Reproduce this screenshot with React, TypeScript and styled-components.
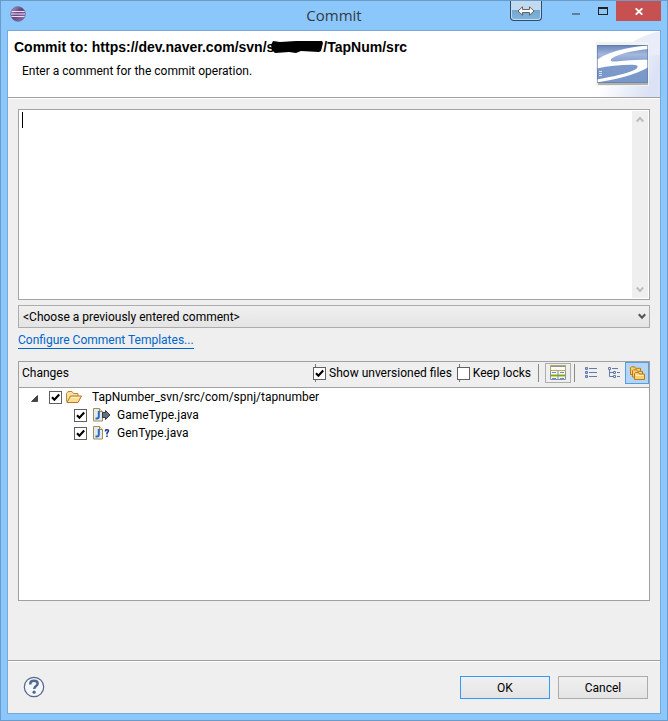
import React, { useState } from "react";
import styled, { createGlobalStyle } from "styled-components";

const Global = createGlobalStyle`
  *, *::before, *::after { box-sizing: border-box; }
  body { margin: 0; }
  body, button, input, select, textarea {
    font-family: Roboto, "Noto Sans", sans-serif;
    font-size: 12px;
    line-height: 18px;
    color: #000;
  }
  button { padding: 0; border: 0; background: none; }
`;

const Window = styled.div`
  display: flex;
  flex-direction: column;
  min-height: 100vh;
  padding: 0 6px 6px;
  border: 1px solid #6b9cc9;
  background: #8cc7fb;
`;

const TitleBar = styled.header`
  display: grid;
  grid-template-columns: 1fr auto 1fr;
  align-items: start;
  height: 29px;
`;

const AppIcon = styled.svg`
  width: 16px;
  height: 16px;
  margin: 5px 0 0 3px;
`;

const Title = styled.h1`
  margin: 0;
  font-family: "Open Sans", "Noto Sans", sans-serif;
  font-size: 15px;
  line-height: 29px;
  font-weight: 400;
  color: #333a44;
`;

const WindowButtons = styled.div`
  display: flex;
  justify-content: flex-end;
  align-items: flex-start;
`;

const SwitchButton = styled.button`
  display: grid;
  place-items: center;
  width: 32px;
  height: 20px;
  margin-right: 20px;
  border: 1px solid #2f4c68;
  border-top: 0;
  border-radius: 0 0 4px 4px;
  background: linear-gradient(#c3daee 0 45%, #74a5cd 50%, #83b4dc);
  box-shadow: inset 0 0 0 1px #bfdcf4;
`;

const CaptionButton = styled.button<{ $close?: boolean }>`
  display: grid;
  place-items: center;
  width: ${(p) => (p.$close ? 45 : 27)}px;
  height: 20px;
  background: ${(p) => (p.$close ? "#c75050" : "transparent")};
`;

const Client = styled.main`
  display: flex;
  flex: 1;
  flex-direction: column;
  border: 1px solid #76a9d9;
  background: #efefef;
`;

const Banner = styled.section`
  display: flex;
  justify-content: space-between;
  height: 67px;
  border-bottom: 1px solid #a0a0a0;
  box-shadow: 0 1px 0 #fff;
  background: #fff;
`;

const BannerText = styled.div`
  padding: 7px 0 0 6px;
`;

const Heading = styled.h2`
  display: flex;
  align-items: center;
  margin: 0;
  font-family: "Liberation Sans", Arial, sans-serif;
  font-size: 14px;
  line-height: 18px;
  font-weight: 700;
`;

const RedactionMark = styled.svg`
  margin-left: -4px;
`;

const Message = styled.p`
  margin: 6px 0 0 8px;
`;

const Body = styled.section`
  display: flex;
  flex: 1;
  flex-direction: column;
  padding: 11px 10px 59px;
`;

const CommentBox = styled.div`
  position: relative;
  display: flex;
  height: 191px;
  border: 1px solid #a3a3a3;
  background: #fff;
`;

const Comment = styled.textarea`
  flex: 1;
  padding: 1px 4px;
  border: 0;
  outline: 0;
  resize: none;
  background: transparent;
  caret-color: transparent;
`;

const Caret = styled.span`
  position: absolute;
  left: 3px;
  top: 2px;
  width: 1px;
  height: 16px;
  background: #000;
`;

const ScrollTrack = styled.div`
  display: flex;
  flex-direction: column;
  justify-content: space-between;
  width: 16px;
  margin: 1px;
  background: #efefef;
`;

const ScrollButton = styled.button`
  display: grid;
  place-items: center;
  height: 17px;
`;

const SelectBox = styled.div`
  position: relative;
  display: flex;
  margin-top: 5px;
`;

const Select = styled.select`
  flex: 1;
  height: 23px;
  padding: 0 24px 0 4px;
  border: 1px solid #acacac;
  border-radius: 0;
  appearance: none;
  background: linear-gradient(#f0f0f0, #e4e4e4);
`;

const SelectArrow = styled.svg`
  position: absolute;
  right: 4px;
  top: 8px;
  pointer-events: none;
`;

const TemplateLink = styled.a`
  align-self: flex-start;
  margin-top: 4px;
  line-height: 16px;
  border-bottom: 1px solid #0066cc;
  color: #0066cc;
  text-decoration: none;
`;

const Changes = styled.section`
  display: flex;
  flex: 1;
  flex-direction: column;
  margin-top: 12px;
  border: 1px solid #a0a0a0;
  background: #fff;
`;

const Toolbar = styled.div`
  display: flex;
  align-items: center;
  height: 26px;
  padding-bottom: 3px;
  border-bottom: 1px solid #a0a0a0;
  background: #efefef;
`;

const ToolbarTitle = styled.h3`
  flex: 1;
  margin: 0;
  padding-left: 3px;
  font-size: 12px;
  font-weight: 400;
`;

const CheckLabel = styled.label<{ $marked?: boolean }>`
  display: flex;
  align-items: center;
  gap: 3px;
  margin-right: 5px;
  white-space: nowrap;
  background: ${(p) => (p.$marked ? "linear-gradient(#777, #777) 2px 0 / 1px 18px no-repeat" : "none")};
`;

const CheckFrame = styled.span`
  position: relative;
  display: flex;
  width: 13px;
  height: 13px;
  flex: none;
`;

const CheckInput = styled.input`
  width: 13px;
  height: 13px;
  margin: 0;
  border: 1px solid #606060;
  appearance: none;
  background: #fff;
  & + svg { visibility: hidden; }
  &:checked + svg { visibility: visible; }
`;

const CheckMark = styled.svg`
  position: absolute;
  inset: 0;
  pointer-events: none;
`;

const Separator = styled.span`
  width: 1px;
  height: 18px;
  background: #8a8a8a;
`;

const ToolButton = styled.button<{ $look?: "framed" | "selected" }>`
  display: grid;
  place-items: center;
  width: ${(p) => (p.$look === "framed" ? 26 : p.$look === "selected" ? 24 : 23)}px;
  height: ${(p) => (p.$look === "framed" ? 20 : 22)}px;
  border: ${(p) => (p.$look === "framed" ? "1px solid #adadad" : p.$look === "selected" ? "1px solid #569de5" : "0")};
  background: ${(p) => (p.$look === "selected" ? "#b5d5f5" : "transparent")};
`;

const ToolGroup = styled.div<{ $start: number; $end: number }>`
  display: flex;
  margin-left: ${(p) => p.$start}px;
  margin-right: ${(p) => p.$end}px;
`;

const Tree = styled.ul`
  margin: 0;
  padding: 0;
  list-style: none;
`;

const TreeRow = styled.div<{ $level: number }>`
  display: flex;
  align-items: center;
  height: 18px;
  padding-left: ${(p) => (p.$level ? 55 : 12)}px;
`;

const TreeLabel = styled.label`
  display: flex;
  align-items: center;
  white-space: nowrap;
`;

const Expander = styled.button`
  display: grid;
  align-items: end;
  width: 18px;
  height: 9px;
`;

const NodeIcon = styled.svg<{ $level: number }>`
  margin: 0 ${(p) => (p.$level ? 5 : 10)}px 0 ${(p) => (p.$level ? 5 : 4)}px;
`;

const Footer = styled.footer`
  display: flex;
  align-items: flex-start;
  gap: 8px;
  height: 53px;
  padding: 15px 12px 0 15px;
  border-top: 1px solid #a0a0a0;
  box-shadow: inset 0 1px 0 #fff;
`;

const HelpButton = styled.button`
  display: grid;
  width: 22px;
  height: 22px;
  margin-right: auto;
`;

const PushButton = styled.button<{ $primary?: boolean }>`
  width: 90px;
  height: 23px;
  border: 1px solid ${(p) => (p.$primary ? "#3399ff" : "#acacac")};
  background: linear-gradient(#f0f0f0, #e4e4e4);
`;

function Check({ on, label }: { on: boolean; label?: string }) {
  const [checked, setChecked] = useState(on);
  return (
    <CheckFrame>
      <CheckInput type="checkbox" aria-label={label} checked={checked} onChange={(e) => setChecked(e.target.checked)} />
      <CheckMark width="13" height="13" viewBox="0 0 13 13">
        <path d="M3 6.2 5.4 8.7 10.2 3.5" fill="none" stroke="#000" strokeWidth="2.1" />
      </CheckMark>
    </CheckFrame>
  );
}

function EclipseIcon() {
  return (
    <AppIcon viewBox="0 0 16 16">
      <defs>
        <linearGradient id="ball" x1="0" y1="0" x2="1" y2="1">
          <stop offset="0" stopColor="#b9a3cb" />
          <stop offset=".45" stopColor="#62457f" />
          <stop offset="1" stopColor="#9b7db0" />
        </linearGradient>
      </defs>
      <circle cx="8" cy="8" r="7.3" fill="url(#ball)" stroke="#765a8f" strokeWidth=".7" />
      <path d="M1.5 5.5h13M1 8h14M1.5 10.5h13" stroke="#e9ddf2" strokeWidth="1.1" />
    </AppIcon>
  );
}

function Logo() {
  return (
    <svg width="120" height="66" viewBox="0 0 120 66">
      <defs>
        <linearGradient id="haze" x1="0" y1="0" x2="1" y2=".3">
          <stop offset=".35" stopColor="#fff" />
          <stop offset="1" stopColor="#dbe2f5" />
        </linearGradient>
        <linearGradient id="tile" x1="0" y1="0" x2="0" y2="1">
          <stop offset="0" stopColor="#6583b9" />
          <stop offset=".25" stopColor="#a4b8dc" />
          <stop offset=".5" stopColor="#7c99c9" />
          <stop offset="1" stopColor="#7898ca" />
        </linearGradient>
        <clipPath id="tileClip"><path d="M57 14h51v38H57z" /></clipPath>
      </defs>
      <path d="M50 67C67 56 78 25 120 18v49z" fill="url(#haze)" />
      <path d="M80 18Q102 4 120 0v24Q100 24 84 34z" fill="#e9edf9" />
      <path d="M56 11h53v44H56z" fill="#f1f1ee" />
      <path d="M58 52h50v2H58z" fill="#b4b2a8" />
      <path d="M57 14h51v38H57z" fill="url(#tile)" />
      <g clipPath="url(#tileClip)">
        <path d="M57 28.500C64 24 73 20.500 84 18 93 16 101 15 109 14.500V18C97 19 83 22 75 25.500 69 28.500 69 31 76 30.500 87 29.500 99 28.500 109 29V36C97 43.500 75 49 57 51.500V48.500C71 46 90 42 96 38 99 35.500 98 33.500 91 33.800 80 34 68 35 57 37.500z" fill="#fff" />
        <path d="M59 40h3v1h-3zM59 42h3v1h-3zM59 44h3v1h-3z" fill="#d5e0f4" />
      </g>
      <path d="M57.500 14.500h50v37h-50z" fill="none" stroke="#5c78ab" opacity=".6" />
    </svg>
  );
}

function Redaction() {
  return (
    <RedactionMark width="53" height="14" viewBox="0 0 53 14" aria-hidden="true">
      <path d="M1 5 3 1 10 2 26 1 52 1 53 3 51 11 49 12 31 11 26 13 19 12 5 13 2 10z" />
    </RedactionMark>
  );
}

const gold = { fill: "#f9cf74", stroke: "#b9791c" };

function FolderIcon() {
  return (
    <NodeIcon $level={0} width="16" height="14" viewBox="0 0 16 14">
      <path d="M.5 11.500V3.500l1.500-2h4l1.500 2h4.500v2.500" fill="#f7dfa6" stroke="#b9883a" />
      <path d="M1 12.500 4.500 6H15.500L12 12.500z" fill="#fbdc93" stroke="#b9791c" />
      <path d="M5 7.500h8.500" stroke="#fff1c8" />
    </NodeIcon>
  );
}

function JavaIcon({ kind }: { kind: "outgoing" | "unknown" }) {
  return (
    <NodeIcon $level={1} width="20" height="16" viewBox="0 0 20 16">
      <path d="M1.500 1.500h6l3 3v9.500h-9z" fill="#dfebf9" stroke="#a88c4a" />
      <path d="M7.500 1.500v3h3" fill="#f4dfa6" stroke="#a88c4a" />
      <path d="M6.800 4v5.500q0 2-1.800 2H3.500" fill="none" stroke="#2f6ab2" strokeWidth="2" />
      {kind === "outgoing" ? (
        <path d="M10.500 5.500h3V3.500l4.500 4.500-4.500 4.500v-2h-3z" fill="#68707e" stroke="#333a46" />
      ) : (
        <path d="M13.500 6.500V5.500q0-.7 1.500-.7t1.500 1q0 .8-1.500 2.200v1.500M15 10.500v1.500" fill="none" stroke="#123096" strokeWidth="1.500" />
      )}
    </NodeIcon>
  );
}

function TreeNode({ name, level, icon, children }: { name: string; level: number; icon: React.ReactNode; children?: React.ReactNode }) {
  return (
    <li>
      <TreeRow $level={level}>
        {level === 0 && (
          <Expander aria-label="Collapse folder">
            <svg width="7" height="7" viewBox="0 0 7 7"><path d="M6.500.5v6H.5z" fill="#444" stroke="#222" strokeWidth=".7" /></svg>
          </Expander>
        )}
        <TreeLabel><Check on />{icon}{name}</TreeLabel>
      </TreeRow>
      {children}
    </li>
  );
}

export default function App() {
  return (
    <>
      <Global />
      <Window>
        <TitleBar>
          <EclipseIcon />
          <Title>Commit</Title>
          <WindowButtons>
            <SwitchButton aria-label="Switch display">
              <svg width="18" height="10" viewBox="0 0 18 10">
                <path d="M1 5 5.500.8V3.500h7V.8L17 5l-4.500 4.200V6.500h-7v2.700z" fill="#fff" stroke="#555" strokeWidth=".9" />
              </svg>
            </SwitchButton>
            <CaptionButton aria-label="Minimize">
              <svg width="10" height="10" viewBox="0 0 10 10"><path d="M1 7h8v2H1z" fill="#5c7f9e" /></svg>
            </CaptionButton>
            <CaptionButton aria-label="Maximize">
              <svg width="10" height="8" viewBox="0 0 10 8"><path d="M0 0h10v8H0zM1 2v5h8V2z" fill="#222" fillRule="evenodd" /></svg>
            </CaptionButton>
            <CaptionButton $close aria-label="Close">
              <svg width="8" height="7" viewBox="0 0 8 7"><path d="M.7.3 7.300 6.700M7.300.3.7 6.700" stroke="#fff" strokeWidth="1.800" /></svg>
            </CaptionButton>
          </WindowButtons>
        </TitleBar>
        <Client>
          <Banner>
            <BannerText>
              <Heading>Commit to: https://dev.naver.com/svn/s<Redaction />/TapNum/src</Heading>
              <Message>Enter a comment for the commit operation.</Message>
            </BannerText>
            <Logo />
          </Banner>
          <Body>
            <CommentBox>
              <Comment aria-label="Comment" />
              <Caret />
              <ScrollTrack>
                <ScrollButton aria-label="Scroll up">
                  <svg width="8" height="7" viewBox="0 0 8 7"><path d="M.8 5.500 4 2l3.200 3.500" fill="none" stroke="#bdbdbd" strokeWidth="2" /></svg>
                </ScrollButton>
                <ScrollButton aria-label="Scroll down">
                  <svg width="8" height="7" viewBox="0 0 8 7"><path d="M.8 1.500 4 5l3.200-3.500" fill="none" stroke="#bdbdbd" strokeWidth="2" /></svg>
                </ScrollButton>
              </ScrollTrack>
            </CommentBox>
            <SelectBox>
              <Select aria-label="Previous comments">
                <option>&lt;Choose a previously entered comment&gt;</option>
              </Select>
              <SelectArrow width="8" height="7" viewBox="0 0 8 7"><path d="M.8 1.200 4 4.700l3.200-3.500" fill="none" stroke="#555" strokeWidth="2.200" /></SelectArrow>
            </SelectBox>
            <TemplateLink href="#templates">Configure Comment Templates...</TemplateLink>
            <Changes>
              <Toolbar>
                <ToolbarTitle>Changes</ToolbarTitle>
                <CheckLabel $marked><Check on />Show unversioned files</CheckLabel>
                <CheckLabel $marked><Check on={false} />Keep locks</CheckLabel>
                <ToolGroup $start={2} $end={6}><Separator /></ToolGroup>
                <ToolButton $look="framed" aria-label="Compare pane">
                  <svg width="16" height="16" viewBox="0 0 16 16">
                    <path d="M.5 1.500h15v13H.5z" fill="#f3f8ff" stroke="#8294b5" />
                    <path d="M1 2h14v3H1z" fill="#fffdf0" />
                    <path d="M0 .5h16M.5 1v4M15.500 1v4M0 5.500h16" stroke="#bda95c" />
                    <path d="M1 9h14v3H1z" fill="#c9dc6c" />
                    <path d="M1 10.500h14" stroke="#84a518" />
                    <path d="M8 5.500V15M2 7.500h4M10 7.500h4M2 13.500h4M10 13.500h4" stroke="#7389b5" />
                  </svg>
                </ToolButton>
                <ToolGroup $start={3} $end={4}><Separator /></ToolGroup>
                <ToolButton aria-label="Flat presentation">
                  <svg width="12" height="12" viewBox="0 0 12 12">
                    <path d="M.5.5h2v2h-2zM.5 4.500h2v2h-2zM.5 8.500h2v2h-2zM4 1.500h8M4 5.500h8M4 9.500h8" fill="#aab8d8" stroke="#647aa8" />
                  </svg>
                </ToolButton>
                <ToolButton aria-label="Tree presentation">
                  <svg width="12" height="12" viewBox="0 0 12 12">
                    <path d="M.5.5h2v2h-2zM5.500 4.500h2v2h-2zM5.500 8.500h2v2h-2zM4 1.500h6M9 5.500h3M9 9.500h3M1.500 3v6.500H5M2 5.500h3" fill="none" stroke="#647aa8" />
                  </svg>
                </ToolButton>
                <ToolButton $look="selected" aria-label="Compressed folders">
                  <svg width="15" height="15" viewBox="0 0 15 15" strokeLinejoin="round">
                    <path d="M.5 8.500V1.800L1.500.8h3l1 1.500h5v6.200z" {...gold} />
                    <path d="M2.500 11V4.800l1-1h3l1 1.500h5V11z" {...gold} />
                    <path d="M4.500 13.500v-6l1-1h3l1 1.500h5v5.500z" {...gold} />
                    <path d="M5.500 9.500h8" stroke="#fff0c0" />
                  </svg>
                </ToolButton>
              </Toolbar>
              <Tree>
                <TreeNode level={0} name="TapNumber_svn/src/com/spnj/tapnumber" icon={<FolderIcon />}>
                  <Tree>
                    <TreeNode level={1} name="GameType.java" icon={<JavaIcon kind="outgoing" />} />
                    <TreeNode level={1} name="GenType.java" icon={<JavaIcon kind="unknown" />} />
                  </Tree>
                </TreeNode>
              </Tree>
            </Changes>
          </Body>
          <Footer>
            <HelpButton aria-label="Help">
              <svg width="22" height="22" viewBox="0 0 22 22">
                <circle cx="11" cy="11" r="9.700" fill="#f4f6f9" stroke="#53678f" strokeWidth="1.200" />
                <path d="M7.300 8.500V7.800q0-3 3.700-3t3.700 2.700c0 2.500-3.500 2.500-3.500 5.500" fill="none" stroke="#53678f" strokeWidth="2.400" />
                <circle cx="11.100" cy="16.200" r="1.600" fill="#53678f" />
              </svg>
            </HelpButton>
            <PushButton $primary>OK</PushButton>
            <PushButton>Cancel</PushButton>
          </Footer>
        </Client>
      </Window>
    </>
  );
}
